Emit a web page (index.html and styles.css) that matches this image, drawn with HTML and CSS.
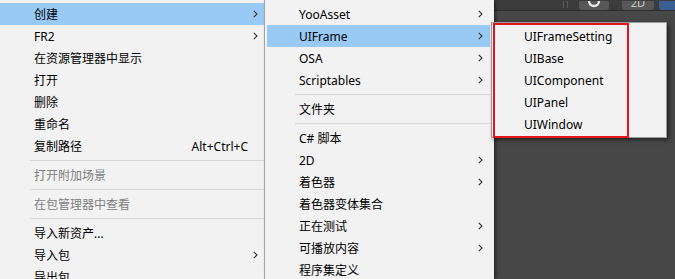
FILE: index.html
```html
<!DOCTYPE html>
<html>

<head>
    <title>Context Menu</title>
    <link rel="stylesheet" href="styles.css">
</head>

<body>
    <div class="editor">
        <div class="toolbar">
            <span class="divider"></span>
            <span class="tool-btn undo">
                <svg width="14" height="8" viewBox="0 0 14 8"><path d="M2 0 A5 5 0 0 0 12 0" fill="none" stroke="#e6e6e6" stroke-width="2.4"/></svg>
            </span>
            <span class="tool-btn mode"><span class="mode-text">2D</span></span>
            <span class="tool-btn blue"></span>
        </div>
        <div class="panel"></div>
    </div>

    <div class="menu menu-main">
        <div class="item active"><span class="label">创建</span><span class="arrow"><svg width="5" height="8" viewBox="0 0 5 8"><path d="M0.8 0.8 L4 4 L0.8 7.2" fill="none" stroke="#333" stroke-width="1.1"/></svg></span></div>
        <div class="item"><span class="label">FR2</span><span class="arrow"><svg width="5" height="8" viewBox="0 0 5 8"><path d="M0.8 0.8 L4 4 L0.8 7.2" fill="none" stroke="#333" stroke-width="1.1"/></svg></span></div>
        <div class="item"><span class="label">在资源管理器中显示</span></div>
        <div class="item"><span class="label">打开</span></div>
        <div class="item"><span class="label">删除</span></div>
        <div class="item"><span class="label">重命名</span></div>
        <div class="item"><span class="label">复制路径</span><span class="shortcut">Alt+Ctrl+C</span></div>
        <div class="sep"></div>
        <div class="item disabled"><span class="label">打开附加场景</span></div>
        <div class="sep"></div>
        <div class="item disabled"><span class="label">在包管理器中查看</span></div>
        <div class="sep"></div>
        <div class="item"><span class="label">导入新资产...</span></div>
        <div class="item"><span class="label">导入包</span><span class="arrow"><svg width="5" height="8" viewBox="0 0 5 8"><path d="M0.8 0.8 L4 4 L0.8 7.2" fill="none" stroke="#333" stroke-width="1.1"/></svg></span></div>
        <div class="item"><span class="label">导出包...</span></div>
    </div>

    <div class="menu menu-sub">
        <div class="item"><span class="label">YooAsset</span><span class="arrow"><svg width="5" height="8" viewBox="0 0 5 8"><path d="M0.8 0.8 L4 4 L0.8 7.2" fill="none" stroke="#333" stroke-width="1.1"/></svg></span></div>
        <div class="item active"><span class="label">UIFrame</span><span class="arrow"><svg width="5" height="8" viewBox="0 0 5 8"><path d="M0.8 0.8 L4 4 L0.8 7.2" fill="none" stroke="#333" stroke-width="1.1"/></svg></span></div>
        <div class="item"><span class="label">OSA</span><span class="arrow"><svg width="5" height="8" viewBox="0 0 5 8"><path d="M0.8 0.8 L4 4 L0.8 7.2" fill="none" stroke="#333" stroke-width="1.1"/></svg></span></div>
        <div class="item"><span class="label">Scriptables</span><span class="arrow"><svg width="5" height="8" viewBox="0 0 5 8"><path d="M0.8 0.8 L4 4 L0.8 7.2" fill="none" stroke="#333" stroke-width="1.1"/></svg></span></div>
        <div class="sep"></div>
        <div class="item"><span class="label">文件夹</span></div>
        <div class="sep"></div>
        <div class="item"><span class="label">C# 脚本</span></div>
        <div class="item"><span class="label">2D</span><span class="arrow"><svg width="5" height="8" viewBox="0 0 5 8"><path d="M0.8 0.8 L4 4 L0.8 7.2" fill="none" stroke="#333" stroke-width="1.1"/></svg></span></div>
        <div class="item"><span class="label">着色器</span><span class="arrow"><svg width="5" height="8" viewBox="0 0 5 8"><path d="M0.8 0.8 L4 4 L0.8 7.2" fill="none" stroke="#333" stroke-width="1.1"/></svg></span></div>
        <div class="item"><span class="label">着色器变体集合</span></div>
        <div class="item"><span class="label">正在测试</span><span class="arrow"><svg width="5" height="8" viewBox="0 0 5 8"><path d="M0.8 0.8 L4 4 L0.8 7.2" fill="none" stroke="#333" stroke-width="1.1"/></svg></span></div>
        <div class="item"><span class="label">可播放内容</span><span class="arrow"><svg width="5" height="8" viewBox="0 0 5 8"><path d="M0.8 0.8 L4 4 L0.8 7.2" fill="none" stroke="#333" stroke-width="1.1"/></svg></span></div>
        <div class="item"><span class="label">程序集定义</span></div>
    </div>

    <div class="menu menu-leaf">
        <div class="item"><span class="label">UIFrameSetting</span></div>
        <div class="item"><span class="label">UIBase</span></div>
        <div class="item"><span class="label">UIComponent</span></div>
        <div class="item"><span class="label">UIPanel</span></div>
        <div class="item"><span class="label">UIWindow</span></div>
        <div class="mark"></div>
    </div>
</body>

</html>
```

FILE: styles.css
```css
html,
body {
    margin: 0;
    height: 100%;
    overflow: hidden;
}

body {
    font-family: "Noto Sans", "Noto Sans CJK SC", sans-serif;
    font-size: 12px;
    background-color: #474747;
    color: #000;
}

.editor {
    display: flex;
    flex-direction: column;
    height: 100%;
}

.toolbar {
    height: 10px;
    background-color: #3c3c3c;
    border-bottom: 1px solid #2e2e2e;
    display: flex;
    justify-content: flex-end;
    align-items: flex-end;
    gap: 5px;
    padding-right: 0;
}

.divider {
    width: 3px;
    height: 7px;
    margin-right: 6px;
    margin-bottom: 2px;
    border-left: 1px solid #5c5c5c;
    border-right: 1px solid #5c5c5c;
}

.tool-btn {
    height: 9px;
    background-color: #575757;
    border-radius: 0 0 3px 3px;
    display: flex;
    justify-content: center;
    overflow: hidden;
}

.tool-btn.undo {
    width: 30px;
    margin-right: 8px;
}

.tool-btn.mode {
    width: 32px;
}

.mode-text {
    color: #c8c8c8;
    font-size: 11px;
    line-height: 4px;
}

.tool-btn.blue {
    width: 16px;
    background-color: #3a5f93;
    border-radius: 0 0 0 3px;
}

.panel {
    flex: 1;
    background-color: #474747;
}

.menu {
    position: absolute;
    background-color: #f2f2f2;
    box-sizing: border-box;
}

.menu-main {
    left: 0;
    top: 0;
    width: 264px;
    height: 279px;
    padding-top: 3px;
}

.menu-sub {
    left: 264px;
    top: 0;
    width: 230px;
    height: 279px;
    padding: 3px 4px 0 2px;
    border-left: 1px solid #a3a3a3;
    box-shadow: 2px 0 3px rgba(0, 0, 0, 0.45);
}

.menu-leaf {
    left: 491px;
    top: 22px;
    width: 176px;
    height: 116px;
    padding-top: 2px;
    border: 1px solid #9a9a9a;
    box-shadow: 2px 2px 4px rgba(0, 0, 0, 0.5);
}

.item {
    height: 22px;
    display: flex;
    align-items: center;
    padding-left: 34px;
    white-space: nowrap;
}

.menu-sub .item {
    padding-left: 32px;
}

.menu-leaf .item {
    padding-left: 32px;
}

.item.active {
    background-color: #99c9f5;
}

.item.disabled {
    color: #808080;
}

.label {
    flex: 1;
}

.arrow {
    display: flex;
    margin-right: 6px;
}

.menu-sub .arrow {
    margin-right: 7px;
}

.shortcut {
    margin-right: 16px;
}

.sep {
    height: 1px;
    background-color: #d6d6d6;
    margin: 3px 0 3px 30px;
}

.menu-sub .sep {
    margin-left: 28px;
}

.mark {
    position: absolute;
    left: 1px;
    top: 0;
    width: 136px;
    height: 115px;
    box-sizing: border-box;
    border: 2px solid #e5131d;
}
```
